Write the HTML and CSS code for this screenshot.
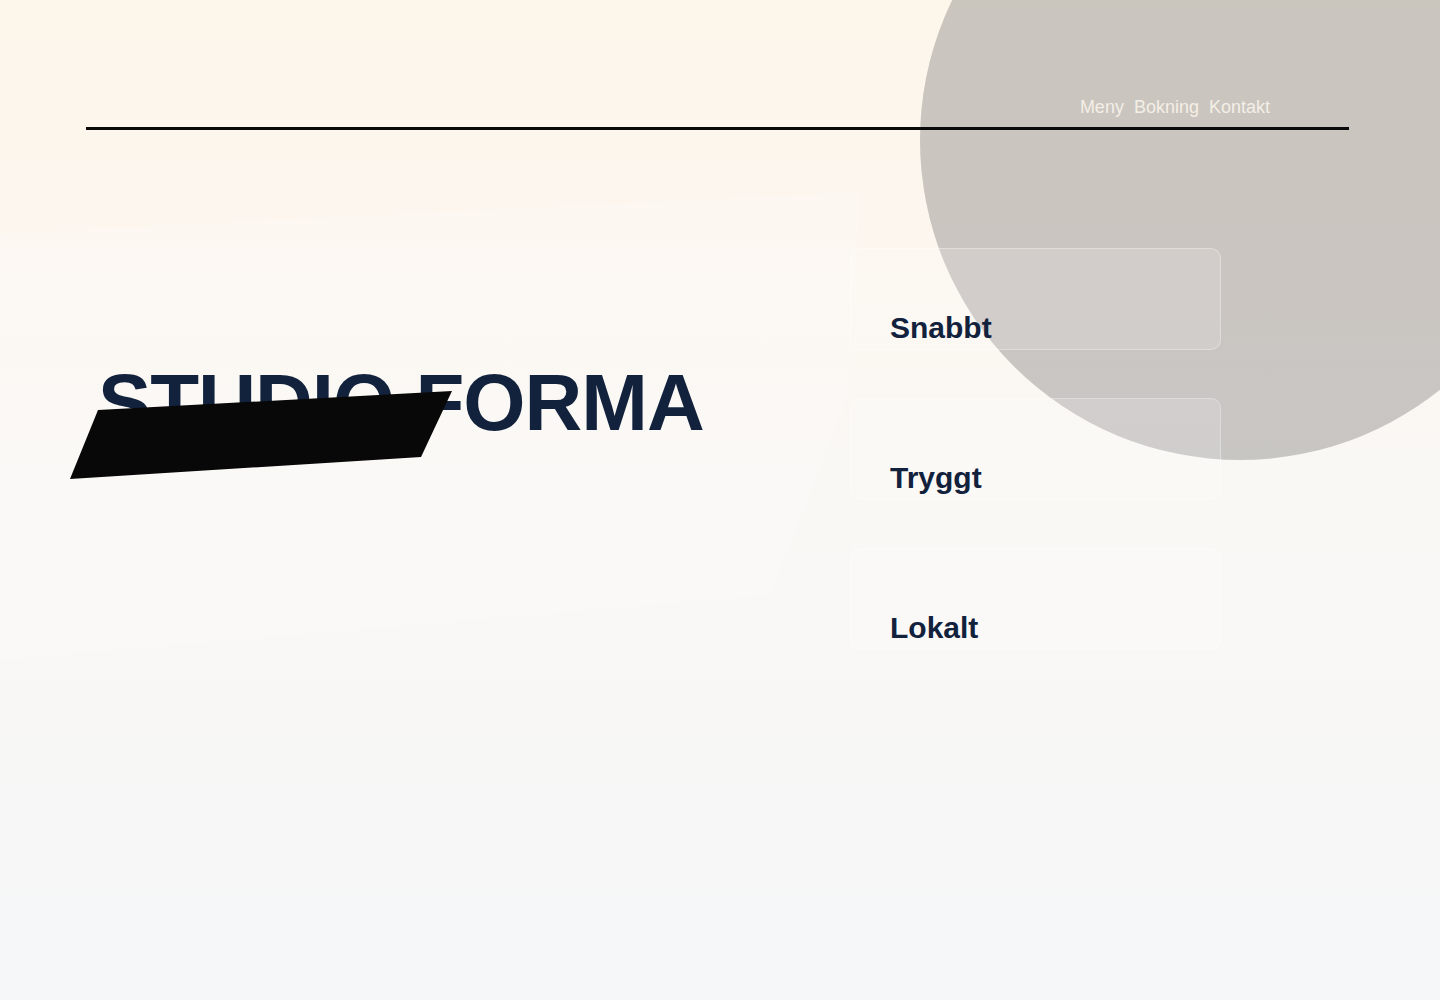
FILE: index.html
```html
<!DOCTYPE html>
<html lang="sv">
<head>
<meta charset="utf-8">
<title>Studio Forma</title>
<link rel="stylesheet" href="styles.css">
</head>
<body>
<div class="orb" aria-hidden="true"></div>
<div class="page">
  <header class="site-header">
    <nav class="nav">
      <a href="#meny">Meny</a>
      <a href="#bokning">Bokning</a>
      <a href="#kontakt">Kontakt</a>
    </nav>
  </header>
  <main class="layout">
    <section class="hero">
      <div class="hero-panel">
        <h1 class="title">STUDIO FORMA</h1>
        <div class="slash" aria-hidden="true"></div>
      </div>
    </section>
    <section class="features">
      <article class="card"><h3>Snabbt</h3></article>
      <article class="card"><h3>Tryggt</h3></article>
      <article class="card"><h3>Lokalt</h3></article>
    </section>
  </main>
</div>
</body>
</html>
```
FILE: styles.css
```css
html, body {
  margin: 0;
  padding: 0;
}

body {
  min-height: 1000px;
  position: relative;
  overflow: hidden;
  font-family: "Liberation Sans", Arial, sans-serif;
  background: linear-gradient(180deg, #fdf6eb 0%, #fdf6ee 20%, #faf8f4 45%, #f6f7f9 100%);
  color: #12213c;
}

.orb {
  position: absolute;
  top: -180px;
  right: -120px;
  width: 640px;
  height: 640px;
  border-radius: 50%;
  background: rgba(100, 98, 96, 0.33);
  z-index: 0;
}

.page {
  position: relative;
  z-index: 1;
}

.site-header {
  margin: 0 91px 0 86px;
  padding: 97px 79px 9px 0;
  border-bottom: 3px solid #0a0a0a;
  display: flex;
  justify-content: flex-end;
}

.nav {
  display: flex;
  gap: 10px;
  font-size: 18px;
  line-height: 21px;
}

.nav a {
  color: #f4efe6;
  text-decoration: none;
}

.layout {
  display: grid;
  grid-template-columns: 850px 371px;
  align-items: start;
}

.hero {
  padding-top: 60px;
  margin-right: -10px;
}

.hero-panel {
  position: relative;
  height: 470px;
  box-sizing: border-box;
  padding: 173px 0 0 98px;
}

.hero-panel::before {
  content: "";
  position: absolute;
  inset: 0;
  background: rgba(255, 255, 255, 0.2);
  clip-path: polygon(0 44px, 240px 32px, 860px 2px, 848px 205px, 770px 405px, 0 470px);
  z-index: -1;
}

.title {
  margin: 0;
  font-size: 80px;
  line-height: 1;
  font-weight: 700;
  letter-spacing: -1px;
  color: #12213c;
  white-space: nowrap;
}

.slash {
  position: absolute;
  left: 70px;
  top: 201px;
  width: 382px;
  height: 88px;
  background: #080808;
  clip-path: polygon(28px 19px, 382px 0, 351px 66px, 0 88px);
}

.features {
  padding-top: 118px;
  display: flex;
  flex-direction: column;
  gap: 48px;
}

.card {
  height: 102px;
  box-sizing: border-box;
  padding: 64px 40px 0;
  border-radius: 10px;
  background: rgba(255, 255, 255, 0.15);
  border: 1px solid rgba(255, 255, 255, 0.3);
}

.card h3 {
  margin: -1px 0 0 -1px;
  font-size: 30px;
  line-height: 32px;
  font-weight: 700;
  color: #12213c;
}
```
